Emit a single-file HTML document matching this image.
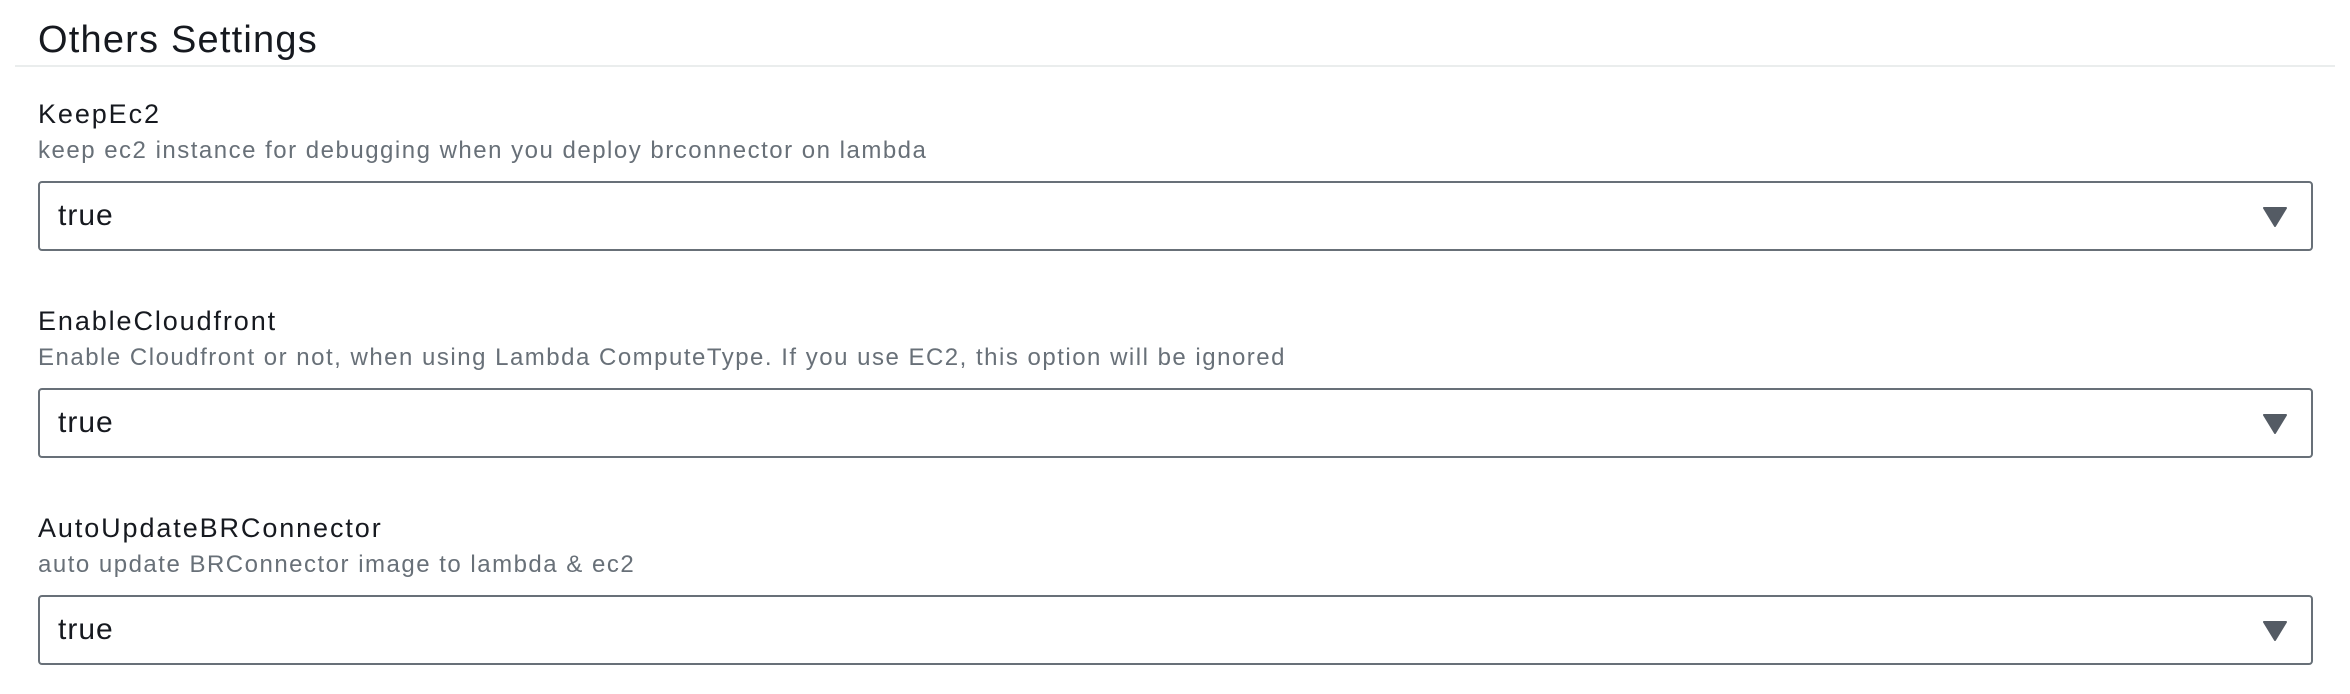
<!DOCTYPE html>
<html><head><meta charset="utf-8"><style>
*{margin:0;padding:0;box-sizing:border-box}
body{width:2350px;height:694px;background:#fff;font-family:"Liberation Sans",sans-serif;color:#16191f;position:relative;overflow:hidden}
.h{position:absolute;left:38px;top:18px;font-size:38px;line-height:44px;letter-spacing:1.2px}
.div{position:absolute;left:15px;right:15px;top:65px;height:2px;background:#eaeded}
.f{position:absolute;left:38px;width:2275px}
.l{position:absolute;left:0;top:-1px;font-size:27px;line-height:30px;letter-spacing:1.9px}
.d{position:absolute;left:0;top:37px;font-size:24px;line-height:28px;color:#687078;letter-spacing:1.5px}
.s{position:absolute;left:0;top:81px;width:2275px;height:70px;border:2px solid #687078;border-radius:4px}
.s span{position:absolute;left:18px;top:17px;font-size:30px;line-height:32px;letter-spacing:1px}
.s svg{position:absolute;right:24px;top:24px}
</style></head><body>
<div class="h">Others Settings</div>
<div class="div"></div>
<div class="f" style="top:100px"><div class="l">KeepEc2</div><div class="d">keep ec2 instance for debugging when you deploy brconnector on lambda</div><div class="s"><span>true</span><svg width="24" height="20" viewBox="0 0 24 20"><path d="M1 1H23L12 19Z" fill="#545b64" stroke="#545b64" stroke-linejoin="round" stroke-width="2"/></svg></div></div>
<div class="f" style="top:307px"><div class="l">EnableCloudfront</div><div class="d">Enable Cloudfront or not, when using Lambda ComputeType. If you use EC2, this option will be ignored</div><div class="s"><span>true</span><svg width="24" height="20" viewBox="0 0 24 20"><path d="M1 1H23L12 19Z" fill="#545b64" stroke="#545b64" stroke-linejoin="round" stroke-width="2"/></svg></div></div>
<div class="f" style="top:514px"><div class="l">AutoUpdateBRConnector</div><div class="d">auto update BRConnector image to lambda &amp; ec2</div><div class="s"><span>true</span><svg width="24" height="20" viewBox="0 0 24 20"><path d="M1 1H23L12 19Z" fill="#545b64" stroke="#545b64" stroke-linejoin="round" stroke-width="2"/></svg></div></div>
</body></html>
